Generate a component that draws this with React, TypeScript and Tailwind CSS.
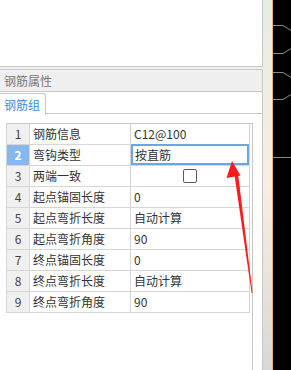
import React from "react";

const rows: { n: number; name: string; value: string; kind?: "check" | "selected" }[] = [
  { n: 1, name: "钢筋信息", value: "C12@100" },
  { n: 2, name: "弯钩类型", value: "按直筋", kind: "selected" },
  { n: 3, name: "两端一致", value: "", kind: "check" },
  { n: 4, name: "起点锚固长度", value: "0" },
  { n: 5, name: "起点弯折长度", value: "自动计算" },
  { n: 6, name: "起点弯折角度", value: "90" },
  { n: 7, name: "终点锚固长度", value: "0" },
  { n: 8, name: "终点弯折长度", value: "自动计算" },
  { n: 9, name: "终点弯折角度", value: "90" },
];

const font = { fontFamily: '"Noto Sans CJK SC", "Noto Sans", sans-serif' };

export default function App() {
  return (
    <div
      className="relative w-[291px] h-[370px] overflow-hidden flex bg-[#f0f0f0] text-[12px] leading-none"
      style={font}
    >
      {/* left column */}
      <div className="w-[263px] h-full flex flex-col">
        <div className="h-[67px] bg-white border-b border-r border-[#c8c8c8]" />
        <div className="h-[2px]" />
        <div className="h-[23px] bg-[#efefef] border-y border-r border-[#c8c8c8] flex items-center pl-[4px] text-[12px] text-[#7a7a7a]">
          钢筋属性
        </div>
        <div className="flex-1 flex flex-col bg-white border-r border-[#c8c8c8]">
          <div className="h-[22px] flex">
            <div className="w-[46px] h-full border-r border-t border-[#c8c8c8] rounded-tr-[3px] flex items-center pl-[4px] text-[#3a8ee6] mt-[1px]">
              钢筋组
            </div>
            <div className="flex-1 border-b border-[#c8c8c8]" />
          </div>
          <div className="flex-1 pl-[6px] pt-[9px]">
            <div className="w-[247px] h-full border-t border-r border-[#c8c8c8]">
              {rows.map((r) => (
                <div key={r.n} className="flex h-[21px] w-[244px] border-l border-b border-[#d6d6d6]">
                  <div
                    className={
                      r.kind === "selected"
                        ? "w-[23px] border-r border-[#d6d6d6] bg-[#86b8ee] text-white font-bold flex items-center justify-center"
                        : "w-[23px] border-r border-[#d6d6d6] bg-[#f0f0f0] text-[#444] flex items-center justify-center"
                    }
                  >
                    {r.n}
                  </div>
                  <div className="w-[101px] border-r border-[#d6d6d6] flex items-center pl-[3px] text-[#333]">
                    {r.name}
                  </div>
                  <div className="w-[119px] border-r border-[#d6d6d6] flex items-center text-[#333]">
                    {r.kind === "selected" ? (
                      <div className="w-full h-[21px] -mt-[1px] border-2 border-[#6aa6e2] flex items-center pl-[2px]">
                        {r.value}
                      </div>
                    ) : r.kind === "check" ? (
                      <div className="w-full flex justify-center">
                        <div className="w-[14px] h-[14px] border border-[#5a5a5a] rounded-[2px] bg-white" />
                      </div>
                    ) : (
                      <span className="pl-[3px]">{r.value}</span>
                    )}
                  </div>
                </div>
              ))}
            </div>
          </div>
        </div>
      </div>

      {/* splitter strip */}
      <div className="w-[10px] h-full bg-gradient-to-b from-[#e6ece6] via-[#f8eee2] to-[#d8d8d8] border-r border-[#f0b070]" />

      {/* dark canvas */}
      <div className="flex-1 h-full bg-black">
        <svg width="18" height="370" viewBox="0 0 18 370" fill="none" stroke="#8a8a8a" strokeWidth="1">
          <polyline points="0,25.5 10,25.5 18,30.5" />
          <polyline points="0,53.5 10,53.5 18,48.5" />
          <polyline points="0,72.5 10,72.5 18,77.5" />
          <polyline points="0,99.5 10,99.5 18,94.5" />
          <polyline points="0,157.5 18,157.5" />
        </svg>
      </div>

      {/* red arrow annotation */}
      <svg
        className="absolute left-0 top-0 pointer-events-none"
        width="291"
        height="370"
        viewBox="0 0 291 370"
      >
        <polygon points="232,161 226.5,178 240.5,175.5" fill="#ff1a1a" />
        <polygon points="234.5,175 238.2,175 252.6,293 251.6,293" fill="#ff1a1a" />
      </svg>
    </div>
  );
}
